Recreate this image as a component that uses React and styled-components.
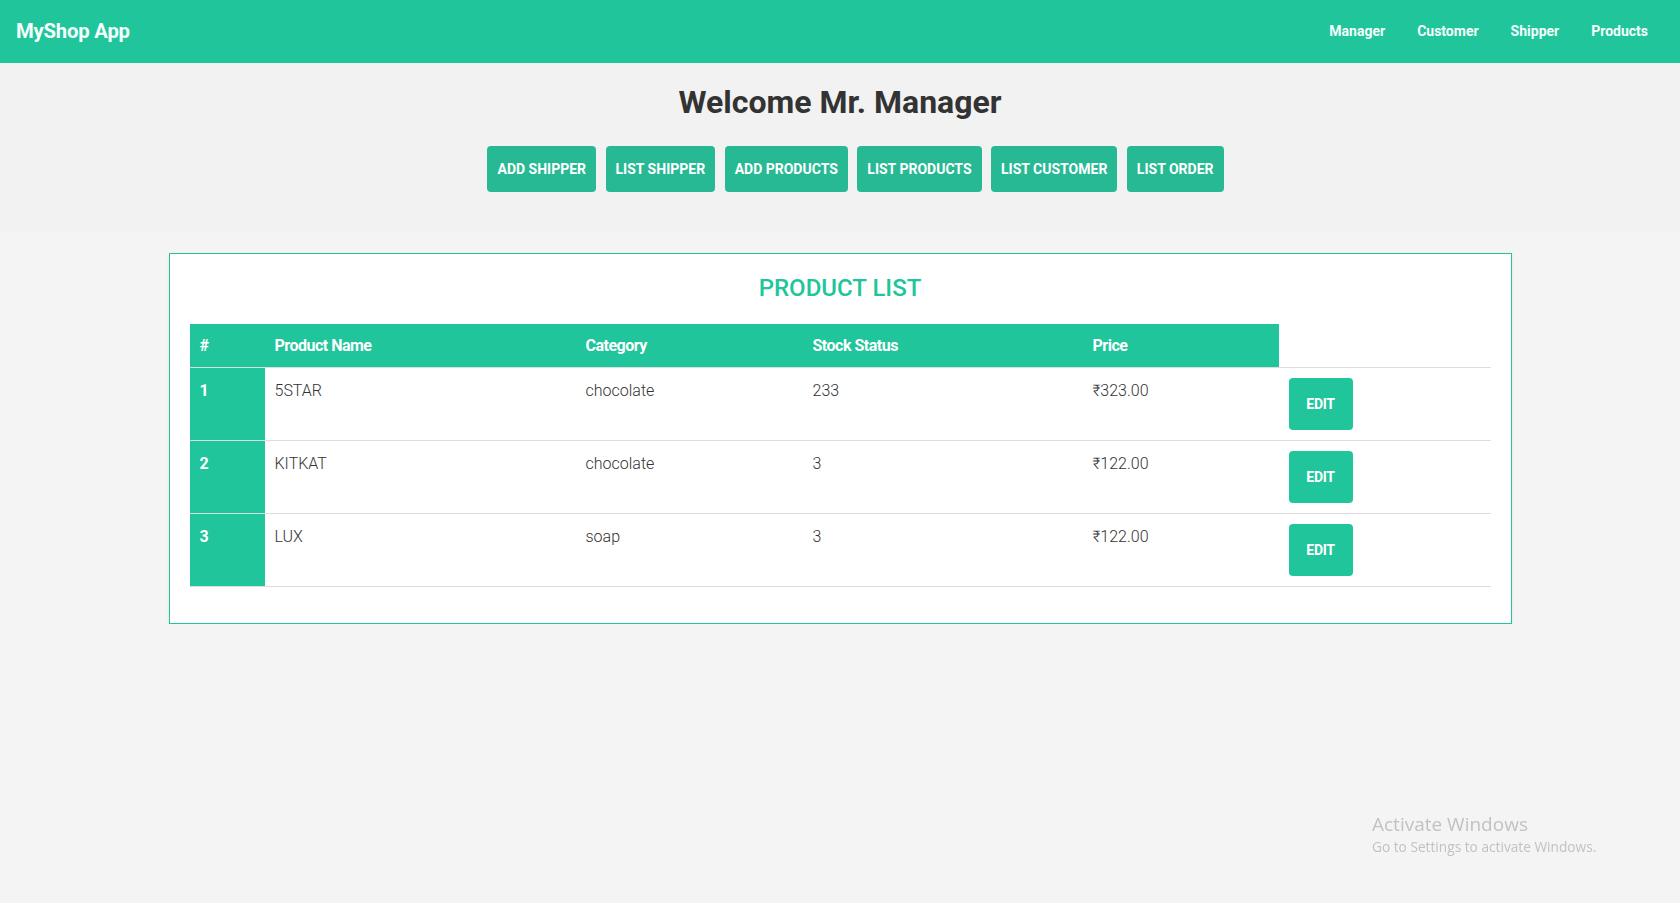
import React from 'react';
import styled, { createGlobalStyle } from 'styled-components';

// colours
const COLORS = {
  MAIN: '#21c59b',
  BUTTON: '#27b994',
  HERO: '#f2f2f2',
  PAGE: '#f4f4f4',
  TEXT: '#333333',
  LINE: '#dddddd',
};

const GlobalStyle = createGlobalStyle`
  * { box-sizing: border-box; }
  body {
    margin: 0;
    background: ${COLORS.PAGE};
    font-family: Roboto, "Liberation Sans", sans-serif;
    color: ${COLORS.TEXT};
  }
`;

// header
const NavBar = styled.nav`
  height: 63px;
  background: ${COLORS.MAIN};
  display: flex;
  align-items: center;
  justify-content: space-between;
  padding: 0 16px;
`;

const Brand = styled.a`
  color: #f4fffb;
  font-size: 20.3px;
  font-weight: 700;
  letter-spacing: -0.2px;
  text-decoration: none;
  padding-bottom: 1px;
`;

const NavLinks = styled.ul`
  display: flex;
  list-style: none;
  margin: 0;
  padding: 0;
`;

const NavLink = styled.li`
  padding: 0 16px;
  color: #f4fffb;
  font-size: 14px;
  font-weight: 700;
  line-height: 63px;
`;

// hero
const Hero = styled.section`
  background: ${COLORS.HERO};
  padding: 14px 0 40px;
  text-align: center;
`;

const Welcome = styled.h1`
  margin: 0;
  font-size: 32px;
  line-height: 50px;
  font-weight: 700;
  color: ${COLORS.TEXT};
`;

const ActionRow = styled.div`
  display: flex;
  justify-content: center;
  gap: 9.5px;
  margin-top: 19px;
  padding-left: 31px;
`;

const ActionButton = styled.button`
  height: 46px;
  padding: 0 10px;
  border: none;
  border-radius: 4px;
  background: ${COLORS.BUTTON};
  color: #ffffff;
  font-family: Roboto, "Liberation Sans", sans-serif;
  font-size: 14px;
  font-weight: 700;
  text-transform: uppercase;
  cursor: pointer;
`;

// product card
const Card = styled.div`
  width: 1343px;
  margin: 21px auto 0;
  background: #ffffff;
  border: 1px solid ${COLORS.MAIN};
  box-shadow: 0 1px 3px rgba(0, 0, 0, 0.08);
  padding: 19px 20px 36px;
`;

const CardTitle = styled.h2`
  margin: 0 0 21px;
  text-align: center;
  color: ${COLORS.MAIN};
  font-size: 24px;
  line-height: 30px;
  font-weight: 500;
`;

const Table = styled.table`
  width: 100%;
  border-collapse: collapse;
  table-layout: fixed;
`;

const HeadCell = styled.th`
  width: ${({ $w }) => $w};
  background: ${({ $blank }) => ($blank ? 'transparent' : COLORS.MAIN)};
  color: #ffffff;
  text-align: left;
  font-size: 16px;
  font-weight: 700;
  letter-spacing: -0.5px;
  line-height: 23px;
  padding: 10px 10px;
  border-bottom: 1px solid ${COLORS.LINE};
`;

const Row = styled.tr`
  border-bottom: 1px solid ${COLORS.LINE};
`;

const Cell = styled.td`
  vertical-align: top;
  padding: 10px 10px;
  font-size: 16px;
  line-height: 25px;
  font-weight: 300;
  color: ${COLORS.TEXT};
`;

const IndexCell = styled(Cell)`
  background: ${COLORS.MAIN};
  color: #ffffff;
  font-weight: 700;
`;

const EditButton = styled.button`
  width: 64px;
  height: 52px;
  border: none;
  border-radius: 4px;
  background: ${COLORS.MAIN};
  color: #ffffff;
  font-family: Roboto, "Liberation Sans", sans-serif;
  font-size: 14px;
  font-weight: 700;
  letter-spacing: -0.3px;
  cursor: pointer;
`;

// watermark
const Watermark = styled.div`
  position: fixed;
  left: 1372px;
  top: 812px;
  color: #c2c2c2;
  font-family: "Open Sans", "Liberation Sans", sans-serif;
`;

const WatermarkTitle = styled.div`
  font-size: 19px;
  line-height: 25px;
`;

const WatermarkText = styled.div`
  font-size: 13.7px;
  line-height: 20px;
`;

const NAV_ITEMS = ['Manager', 'Customer', 'Shipper', 'Products'];

const ACTIONS = ['Add Shipper', 'List Shipper', 'Add Products', 'List Products', 'List Customer', 'List Order'];

const COLUMNS = [
  { label: '#', w: '75px' },
  { label: 'Product Name', w: '311px' },
  { label: 'Category', w: '227px' },
  { label: 'Stock Status', w: '280px' },
  { label: 'Price', w: '196px' },
];

const PRODUCTS = [
  { id: 1, name: '5STAR', category: 'chocolate', stock: 233, price: 323 },
  { id: 2, name: 'KITKAT', category: 'chocolate', stock: 3, price: 122 },
  { id: 3, name: 'LUX', category: 'soap', stock: 3, price: 122 },
];

export default function App() {
  return (
    <>
      <GlobalStyle />
      <NavBar>
        <Brand href="#">MyShop App</Brand>
        <NavLinks>
          {NAV_ITEMS.map(item => <NavLink key={item}>{item}</NavLink>)}
        </NavLinks>
      </NavBar>

      <Hero>
        <Welcome>Welcome Mr. Manager</Welcome>
        <ActionRow>
          {ACTIONS.map(a => <ActionButton key={a}>{a}</ActionButton>)}
        </ActionRow>
      </Hero>

      <Card>
        <CardTitle>PRODUCT LIST</CardTitle>
        <Table>
          <thead>
            <tr>
              {COLUMNS.map(c => <HeadCell key={c.label} $w={c.w}>{c.label}</HeadCell>)}
              <HeadCell $blank />
            </tr>
          </thead>
          <tbody>
            {PRODUCTS.map(p =>
              <Row key={p.id}>
                <IndexCell>{p.id}</IndexCell>
                <Cell>{p.name}</Cell>
                <Cell>{p.category}</Cell>
                <Cell>{p.stock}</Cell>
                <Cell>₹{p.price.toFixed(2)}</Cell>
                <Cell>
                  <EditButton>EDIT</EditButton>
                </Cell>
              </Row>
            )}
          </tbody>
        </Table>
      </Card>

      <Watermark>
        <WatermarkTitle>Activate Windows</WatermarkTitle>
        <WatermarkText>Go to Settings to activate Windows.</WatermarkText>
      </Watermark>
    </>
  );
}
